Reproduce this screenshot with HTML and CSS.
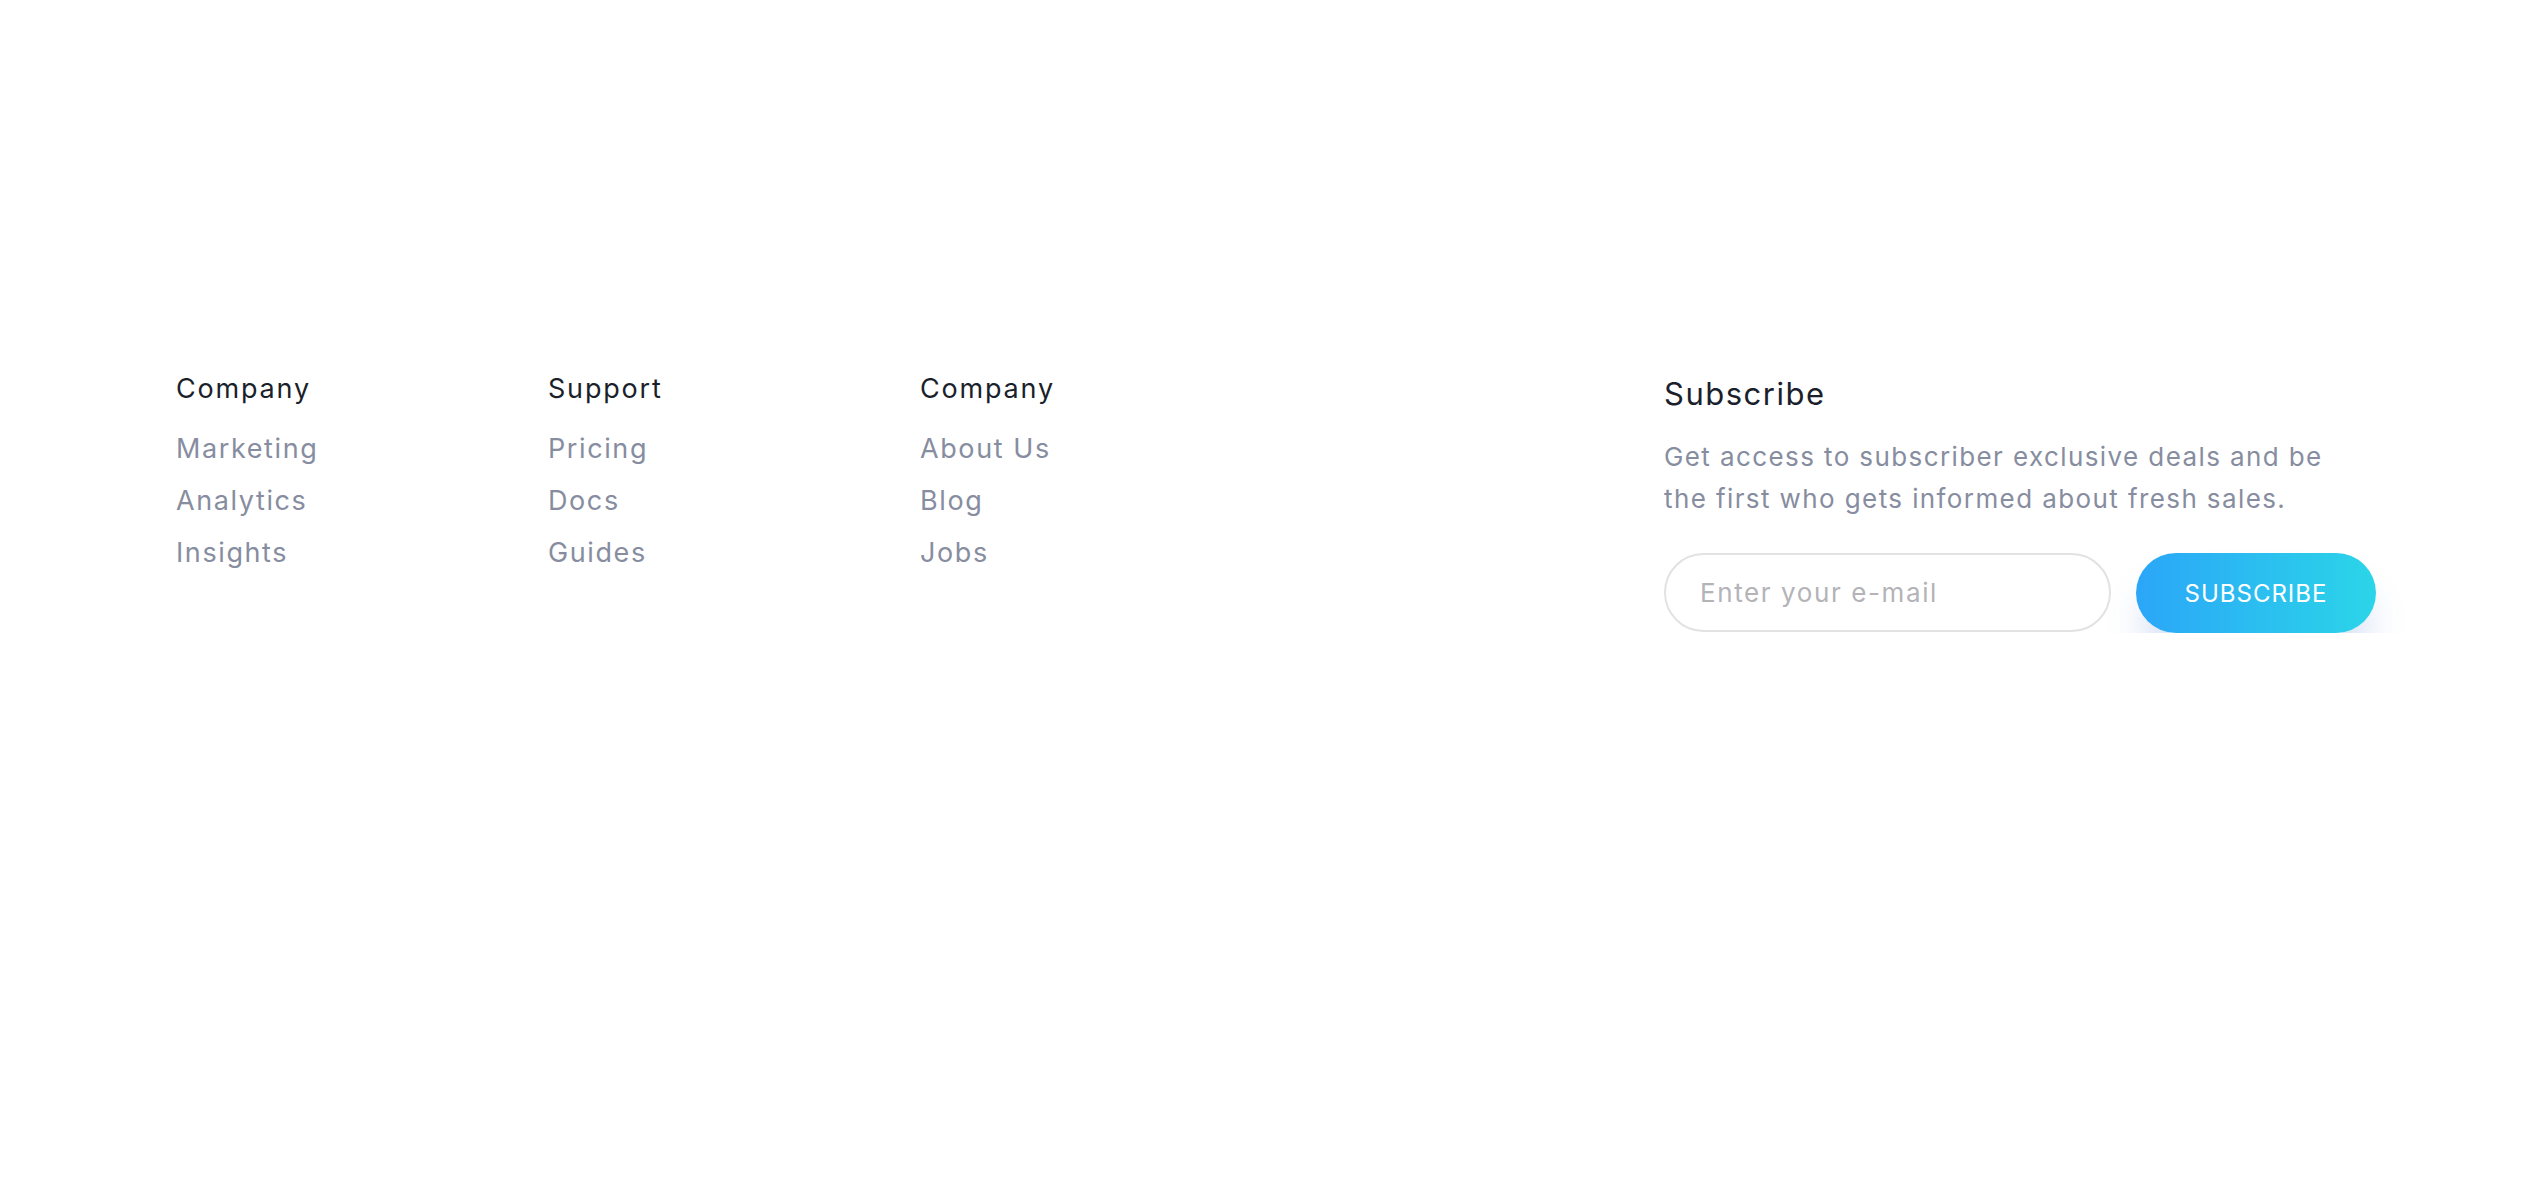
FILE: index.html
```html
<!DOCTYPE html>
<html lang="en">
<head>
    <meta charset="utf-8">
    <title>Footer</title>
    <link rel="stylesheet" href="styles.css">
</head>
<body>
    <footer class="footer">
        <div class="footer-links">
            <div class="link-col">
                <h4 class="col-title">Company</h4>
                <a href="#">Marketing</a>
                <a href="#">Analytics</a>
                <a href="#">Insights</a>
            </div>
            <div class="link-col">
                <h4 class="col-title">Support</h4>
                <a href="#">Pricing</a>
                <a href="#">Docs</a>
                <a href="#">Guides</a>
            </div>
            <div class="link-col">
                <h4 class="col-title">Company</h4>
                <a href="#">About Us</a>
                <a href="#">Blog</a>
                <a href="#">Jobs</a>
            </div>
        </div>

        <div class="subscribe">
            <h3 class="subscribe-title">Subscribe</h3>
            <p class="subscribe-text">Get access to subscriber exclusive deals and be the first who gets informed about fresh sales.</p>
            <form class="subscribe-form">
                <input type="email" class="email-input" placeholder="Enter your e-mail">
                <button type="button" class="subscribe-btn">Subscribe</button>
            </form>
        </div>
    </footer>
</body>
</html>
```

FILE: styles.css
```css
body {
    margin: 0;
    background: #ffffff;
    font-family: Inter, 'Open Sans', sans-serif;
}

.footer {
    display: flex;
    justify-content: space-between;
    padding: 371px 160px 0 176px;
}

.footer-links {
    display: flex;
}

.link-col {
    display: flex;
    flex-direction: column;
    width: 372px;
}

.col-title {
    margin: 0 0 16px 0;
    font-size: 27px;
    line-height: 36px;
    font-weight: 400;
    letter-spacing: 1.8px;
    color: #1b1f2c;
}

.link-col a {
    font-size: 27px;
    line-height: 52px;
    letter-spacing: 1.6px;
    color: #878da0;
    text-decoration: none;
}

.subscribe {
    width: 712px;
}

.subscribe-title {
    margin: 3px 0 0 0;
    font-size: 31px;
    line-height: 40px;
    font-weight: 400;
    letter-spacing: 1.5px;
    color: #1b1f2c;
}

.subscribe-text {
    margin: 22px 0 0 0;
    width: 690px;
    font-size: 26px;
    line-height: 42px;
    letter-spacing: 1.4px;
    color: #878da0;
}

.subscribe-form {
    display: flex;
    gap: 25px;
    margin-top: 33px;
}

.email-input {
    box-sizing: border-box;
    width: 447px;
    height: 79px;
    padding: 0 34px;
    border: 2px solid #e2e2e2;
    border-radius: 40px;
    font-family: inherit;
    font-size: 26px;
    letter-spacing: 1.6px;
    color: #333333;
    outline: none;
}

.email-input::placeholder {
    color: #b3b3b8;
}

.subscribe-btn {
    width: 240px;
    height: 80px;
    border: none;
    border-radius: 40px;
    background: linear-gradient(90deg, #2ba6f8 0%, #2bd5e8 100%);
    box-shadow: 0 30px 40px -10px rgba(50, 100, 200, 0.26);
    font-family: inherit;
    font-size: 24px;
    letter-spacing: 1px;
    text-transform: uppercase;
    color: #ffffff;
    cursor: pointer;
}
```
